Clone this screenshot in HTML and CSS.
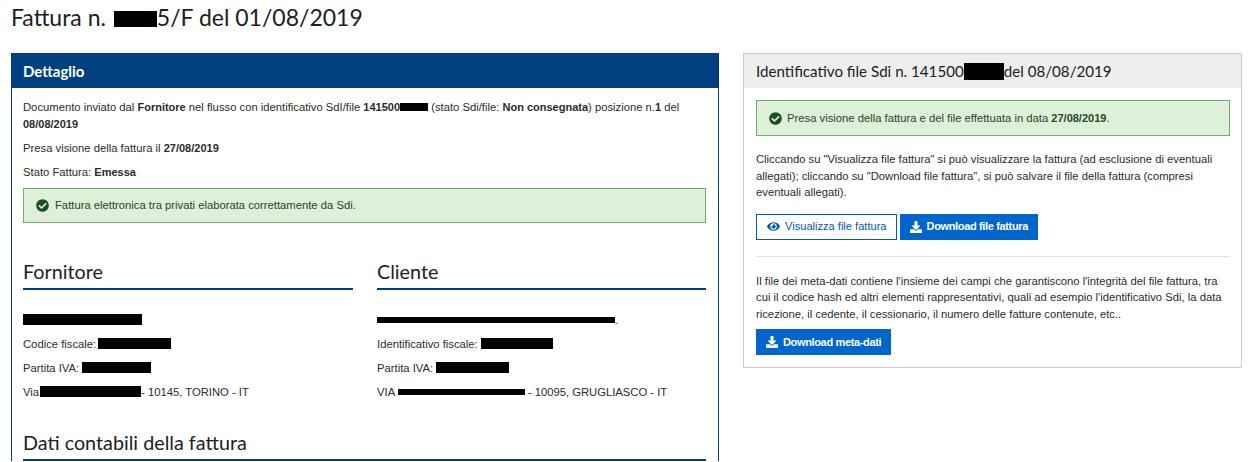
FILE: index.html
```html
<!DOCTYPE html>
<html lang="it">
<head>
    <meta charset="UTF-8">
    <meta name="viewport" content="width=device-width, initial-scale=1.0">
    <title>Fattura</title>
    <link rel="stylesheet" href="styles.css">
</head>
<body>
    <svg class="icon-defs" width="0" height="0">
        <symbol id="i-check" viewBox="0 0 512 512">
            <path fill="currentColor" d="M504 256c0 136.967-111.033 248-248 248S8 392.967 8 256 119.033 8 256 8s248 111.033 248 248zM227.314 387.314l184-184c6.248-6.248 6.248-16.379 0-22.627l-22.627-22.627c-6.248-6.249-16.379-6.249-22.628 0L216 308.118l-70.059-70.059c-6.248-6.248-16.379-6.248-22.628 0l-22.627 22.627c-6.248 6.248-6.248 16.379 0 22.627l104 104c6.249 6.249 16.379 6.249 22.628.001z"/>
        </symbol>
        <symbol id="i-download" viewBox="0 0 512 512">
            <path fill="currentColor" d="M216 0h80c13.300 0 24 10.700 24 24v168h87.700c17.800 0 26.700 21.500 14.100 34.100L269.700 378.300c-7.500 7.500-19.800 7.500-27.300 0L90.100 226.100c-12.600-12.600-3.700-34.100 14.100-34.100H192V24c0-13.300 10.700-24 24-24zm296 376v112c0 13.300-10.700 24-24 24H24c-13.300 0-24-10.700-24-24V376c0-13.300 10.700-24 24-24h146.700l49 49c20.100 20.100 52.500 20.100 72.600 0l49-49H488c13.300 0 24 10.700 24 24z"/>
        </symbol>
        <symbol id="i-eye" viewBox="0 0 576 512">
            <path fill="currentColor" d="M572.520 241.400C518.290 135.590 410.930 64 288 64S57.680 135.640 3.480 241.410a32.350 32.350 0 0 0 0 29.190C57.710 376.410 165.070 448 288 448s230.320-71.640 284.520-177.410a32.350 32.350 0 0 0 0-29.190zM288 400a144 144 0 1 1 144-144 143.930 143.930 0 0 1-144 144zm0-240a95.310 95.310 0 0 0-25.310 3.790 47.850 47.850 0 0 1-66.900 66.900A95.780 95.780 0 1 0 288 160z"/>
        </symbol>
    </svg>

    <h1 class="page-title">Fattura n. <span class="redact redact-title"></span>5/F del 01/08/2019</h1>

    <div class="columns">
        <section class="panel-main">
            <h2 class="panel-main-head">Dettaglio</h2>
            <div class="panel-main-body">
                <p>Documento inviato dal <b>Fornitore</b> nel flusso con identificativo SdI/file <b>141500<span class="redact redact-sdi"></span></b> (stato Sdi/file: <b>Non consegnata</b>) posizione n.<b>1</b> del <b>08/08/2019</b></p>
                <p>Presa visione della fattura il <b>27/08/2019</b></p>
                <p>Stato Fattura: <b>Emessa</b></p>
                <div class="alert alert-main">
                    <svg class="icon icon-check"><use href="#i-check"/></svg>
                    <span>Fattura elettronica tra privati elaborata correttamente da Sdi.</span>
                </div>

                <div class="parties">
                    <div>
                        <h3 class="section-title">Fornitore</h3>
                        <div class="party-lines">
                            <p><span class="redact" style="width: 119px"></span></p>
                            <p>Codice fiscale:<span class="redact" style="width: 73px; margin-left: 2px"></span></p>
                            <p>Partita IVA: <span class="redact" style="width: 69px"></span></p>
                            <p>Via<span class="redact" style="width: 101px; margin-left: 1px"></span>- 10145, TORINO - IT</p>
                        </div>
                    </div>
                    <div>
                        <h3 class="section-title">Cliente</h3>
                        <div class="party-lines">
                            <p><span class="redact redact-thin" style="width: 238px"></span>.</p>
                            <p>Identificativo fiscale: <span class="redact" style="width: 72px"></span></p>
                            <p>Partita IVA: <span class="redact" style="width: 73px"></span></p>
                            <p>VIA <span class="redact redact-thin" style="width: 127px"></span> - 10095, GRUGLIASCO - IT</p>
                        </div>
                    </div>
                </div>

                <h3 class="section-title section-last">Dati contabili della fattura</h3>
            </div>
        </section>

        <aside class="panel-side">
            <h2 class="panel-side-head">Identificativo file Sdi n. 141500<span class="redact redact-head"></span>del 08/08/2019</h2>
            <div class="panel-side-body">
                <div class="alert alert-side">
                    <svg class="icon icon-check"><use href="#i-check"/></svg>
                    <span>Presa visione della fattura e del file effettuata in data <b>27/08/2019</b>.</span>
                </div>
                <p>Cliccando su "Visualizza file fattura" si può visualizzare la fattura (ad esclusione di eventuali allegati); cliccando su "Download file fattura", si può salvare il file della fattura (compresi eventuali allegati).</p>
                <div class="btn-row">
                    <a class="btn btn-outline"><svg class="icon"><use href="#i-eye"/></svg>Visualizza file fattura</a>
                    <a class="btn btn-solid"><svg class="icon icon-dl"><use href="#i-download"/></svg>Download file fattura</a>
                </div>
                <hr class="divider">
                <p>Il file dei meta-dati contiene l'insieme dei campi che garantiscono l'integrità del file fattura, tra cui il codice hash ed altri elementi rappresentativi, quali ad esempio l'identificativo Sdi, la data ricezione, il cedente, il cessionario, il numero delle fatture contenute, etc..</p>
                <div class="btn-row btn-row-meta">
                    <a class="btn btn-solid"><svg class="icon icon-dl"><use href="#i-download"/></svg>Download meta-dati</a>
                </div>
            </div>
        </aside>
    </div>
</body>
</html>
```

FILE: styles.css
```css
html, body {
    height: 462px;
    overflow: hidden;
}
body {
    margin: 0;
    padding: 0 11px;
    background-color: #fff;
    color: #2b2b2b;
    font-family: "Liberation Sans", Arial, sans-serif;
    font-size: 11.250px;
    line-height: 17px;
}
b {
    font-size: 11px;
}
.icon-defs {
    display: block;
    height: 0;
}
.page-title {
    margin: 0;
    padding-top: 2px;
    height: 51px;
    font-family: Lato, sans-serif;
    font-size: 23px;
    font-weight: 400;
    line-height: 30px;
    color: #1c2024;
}
.columns {
    display: grid;
    grid-template-columns: 708px 499px;
    gap: 24px;
    align-items: start;
}
p {
    margin: 0 0 7px;
}
.redact {
    display: inline-block;
    height: 11px;
    background-color: #000;
    vertical-align: -1px;
}
.redact-title {
    width: 43px;
    height: 16px;
    margin-left: 2px;
    vertical-align: -1px;
}
.redact-sdi {
    width: 28px;
    height: 8px;
    vertical-align: 0;
}
.redact-head {
    width: 40px;
    height: 17px;
    vertical-align: -3px;
}
.redact-thin {
    height: 6px;
    vertical-align: 1px;
}

.panel-main {
    border: 1px solid #004080;
    border-bottom: none;
}
.panel-main-head {
    margin: 0;
    padding: 0 11px;
    height: 34px;
    background-color: #004080;
    color: #fff;
    font-family: Lato, sans-serif;
    font-size: 15px;
    font-weight: 700;
    line-height: 35px;
}
.panel-main-body {
    padding: 11px 12px 0 11px;
}
.alert {
    display: flex;
    align-items: center;
    gap: 6px;
    box-sizing: border-box;
    border: 1px solid #6fae72;
    background-color: #dff0d8;
    color: #24482a;
}
.alert-main {
    height: 35px;
    padding: 0 12px;
    margin-top: 7px;
}
.alert-side {
    height: 36px;
    padding: 0 12px;
    gap: 5px;
    margin-bottom: 15px;
}
.icon {
    width: 13px;
    height: 13px;
    flex: none;
}
.icon-check {
    color: #1e4d26;
}
.icon-dl {
    width: 12px;
    height: 12px;
}

.parties {
    display: grid;
    grid-template-columns: 330px 329px;
    gap: 24px;
    margin-top: 33px;
}
.section-title {
    margin: 0;
    height: 32px;
    border-bottom: 2px solid #004080;
    font-family: Lato, sans-serif;
    font-size: 19.750px;
    font-weight: 400;
    line-height: 32px;
    color: #1c2024;
}
.party-lines {
    padding-top: 22px;
}
.section-last {
    margin-top: 19px;
}

.panel-side {
    border: 1px solid #ccc;
}
.panel-side-head {
    margin: 0;
    padding: 0 12px;
    height: 34px;
    background-color: #eee;
    font-family: Lato, sans-serif;
    font-size: 15.150px;
    font-weight: 400;
    line-height: 34px;
    color: #1c2024;
}
.panel-side-body {
    padding: 12px 11px 12px 12px;
    line-height: 16.500px;
}
.panel-side-body p {
    margin: 0;
}
.btn-row {
    display: flex;
    gap: 3px;
    margin-top: 13px;
}
.btn-row-meta {
    margin-top: 7px;
}
.btn {
    display: flex;
    align-items: center;
    gap: 5px;
    box-sizing: border-box;
    height: 26px;
    padding: 0 10px;
    text-decoration: none;
}
.btn-outline {
    padding-right: 9px;
    border: 1px solid #0059b3;
    color: #0059b3;
    font-size: 11.100px;
}
.btn-solid {
    background-color: #0066cc;
    color: #fff;
    font-size: 11px;
    font-weight: 700;
    letter-spacing: -0.350px;
}
.divider {
    margin: 16px 0;
    border: none;
    border-top: 1px solid #e3e3e3;
}
```
